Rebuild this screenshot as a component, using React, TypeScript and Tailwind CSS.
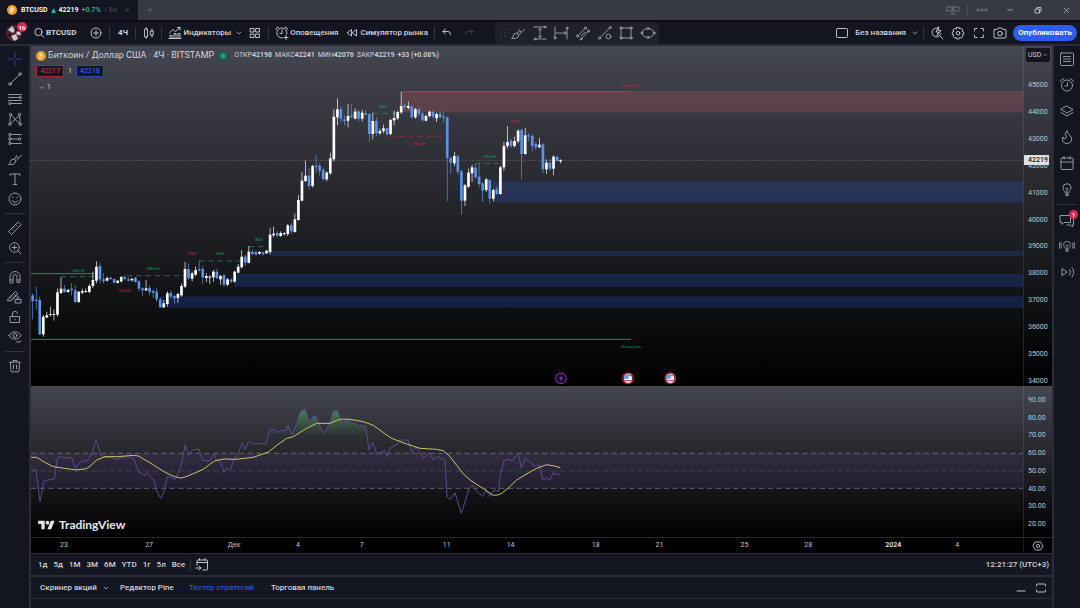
import { ReactNode } from "react";
import clsx from "clsx";
import { ChevronDown, Flame, Minus, Plus, X } from "lucide-react";

// Each candle: [high, body top, body bottom, low, 1 = up / 0 = down]
type Candle = [number, number, number, number, 0 | 1];

const CANDLE_STEP = 10.63;

// Candles are grouped by swing, y values are relative to the base of the swing
const swings: Array<{ base: number; candles: Candle[] }> = [
  {
    base: 522,
    candles: [
      [220, 226, 243, 298, 0],
      [200, 239, 243, 268, 0],
      [230, 240, 343, 345, 0],
      [285, 290, 343, 350, 1],
      [275, 286, 292, 295, 1],
      [260, 282, 285, 290, 1],
      [268, 282, 285, 302, 1],
      [205, 217, 284, 290, 1],
      [172, 206, 219, 222, 1],
      [195, 206, 216, 218, 0],
      [206, 210, 216, 218, 1],
      [190, 206, 211, 226, 0],
      [195, 211, 246, 250, 0],
      [213, 215, 246, 248, 1],
      [206, 213, 218, 222, 1],
      [205, 213, 216, 218, 1],
      [192, 198, 216, 220, 1],
      [155, 180, 198, 204, 1],
      [124, 140, 182, 190, 1],
      [128, 138, 178, 190, 0],
      [160, 178, 184, 190, 0],
      [170, 174, 182, 184, 1],
      [170, 173, 177, 180, 0],
      [175, 177, 188, 190, 0],
      [180, 182, 189, 190, 1],
      [168, 171, 184, 188, 1],
      [165, 171, 177, 180, 0],
      [172, 178, 182, 184, 0],
      [173, 177, 181, 184, 1],
      [171, 173, 186, 188, 0],
      [180, 184, 206, 214, 0],
      [202, 205, 211, 228, 0],
      [180, 205, 211, 213, 1],
      [196, 204, 216, 226, 0],
      [208, 213, 218, 234, 0],
      [205, 215, 238, 246, 0],
      [232, 238, 262, 264, 0],
      [240, 250, 262, 264, 1],
      [214, 220, 252, 260, 1],
      [212, 219, 230, 234, 0],
      [225, 228, 235, 252, 0],
      [218, 222, 234, 248, 1],
      [190, 198, 226, 230, 1],
      [125, 147, 200, 204, 1],
      [130, 147, 174, 180, 0],
      [155, 160, 176, 184, 1],
      [140, 150, 164, 168, 1],
    ],
  },
  {
    base: 432,
    candles: [
      [212, 237, 241, 245, 0],
      [228, 237, 262, 282, 0],
      [250, 258, 264, 276, 1],
      [256, 260, 263, 282, 1],
      [240, 245, 262, 275, 1],
      [236, 245, 264, 268, 0],
      [255, 258, 268, 284, 1],
      [252, 256, 284, 290, 0],
      [264, 268, 284, 288, 1],
      [264, 269, 275, 280, 0],
      [242, 245, 275, 278, 1],
      [222, 230, 248, 250, 1],
      [180, 200, 232, 235, 1],
      [195, 200, 218, 228, 0],
      [168, 185, 218, 220, 1],
      [178, 185, 192, 196, 0],
      [182, 186, 194, 197, 0],
      [183, 186, 191, 194, 1],
      [184, 187, 193, 196, 0],
      [180, 182, 190, 192, 1],
      [114, 134, 186, 192, 1],
      [110, 131, 136, 142, 1],
      [122, 129, 137, 142, 0],
      [124, 129, 138, 140, 1],
      [126, 130, 133, 136, 1],
      [102, 106, 132, 138, 1],
      [98, 106, 124, 132, 0],
      [70, 88, 126, 128, 1],
      [15, 30, 90, 92, 1],
    ],
  },
  {
    base: 102,
    candles: [
      [276, 302, 362, 364, 1],
      [242, 287, 303, 306, 1],
      [265, 287, 318, 328, 0],
      [254, 258, 318, 322, 1],
      [224, 257, 261, 278, 0],
      [250, 257, 272, 286, 0],
      [262, 270, 297, 302, 0],
      [274, 278, 298, 304, 1],
      [218, 235, 280, 284, 1],
      [88, 110, 238, 244, 1],
      [55, 88, 112, 136, 1],
      [80, 87, 116, 128, 0],
      [106, 118, 123, 136, 0],
      [72, 108, 122, 142, 1],
      [74, 106, 110, 116, 0],
      [85, 95, 116, 118, 1],
      [90, 94, 116, 126, 0],
      [90, 98, 116, 124, 1],
      [90, 99, 104, 106, 0],
      [100, 102, 162, 186, 0],
      [98, 123, 162, 178, 1],
      [112, 122, 160, 168, 0],
      [146, 153, 160, 164, 1],
      [134, 145, 153, 160, 1],
      [142, 144, 164, 166, 0],
      [116, 120, 162, 166, 1],
      [92, 114, 121, 136, 1],
      [92, 96, 115, 120, 1],
      [35, 78, 97, 102, 1],
      [70, 76, 82, 86, 0],
      [64, 78, 84, 88, 1],
      [76, 80, 112, 114, 0],
      [84, 88, 112, 116, 1],
      [82, 88, 102, 110, 0],
      [96, 101, 121, 124, 0],
      [104, 108, 122, 124, 1],
      [92, 95, 108, 112, 1],
      [93, 95, 110, 116, 0],
      [98, 102, 115, 126, 1],
      [94, 101, 112, 116, 0],
      [94, 109, 113, 128, 0],
      [110, 112, 234, 364, 0],
      [230, 234, 248, 282, 0],
      [216, 228, 250, 258, 1],
      [224, 228, 276, 284, 0],
      [270, 274, 362, 404, 0],
      [312, 316, 362, 378, 1],
      [266, 278, 320, 324, 1],
      [254, 262, 280, 306, 1],
      [252, 263, 292, 296, 0],
      [250, 290, 312, 322, 0],
      [306, 310, 332, 366, 0],
      [294, 298, 330, 336, 1],
      [298, 300, 356, 372, 0],
      [326, 330, 356, 364, 1],
      [318, 328, 342, 344, 0],
      [258, 262, 342, 344, 1],
      [186, 198, 262, 272, 1],
      [138, 186, 198, 206, 1],
      [176, 182, 198, 204, 0],
      [170, 183, 198, 202, 1],
      [148, 152, 184, 190, 1],
      [146, 150, 222, 298, 0],
      [144, 166, 222, 224, 1],
      [160, 166, 170, 184, 0],
      [162, 168, 198, 214, 0],
      [186, 192, 202, 210, 0],
      [174, 194, 202, 204, 1],
      [190, 193, 268, 280, 0],
      [238, 248, 268, 282, 1],
      [238, 248, 266, 272, 0],
      [226, 230, 266, 286, 1],
      [228, 230, 243, 246, 0],
      [238, 240, 244, 250, 1],
    ],
  },
];

const candles = swings.flatMap(({ base, candles }) =>
  candles.map(([high, top, bottom, low, up]) => ({
    high: high + base,
    top: top + base,
    bottom: bottom + base,
    low: low + base,
    up: up === 1,
  })),
);

const demandZones = [
  { x: 1385, y: 407, height: 62 },
  { x: 711, y: 615, height: 15 },
  { x: 610, y: 684, height: 39 },
  { x: 387, y: 751, height: 34 },
];

const structureLines = [
  { x1: 90, x2: 190, y: 692, color: "#2f8f6c" },
  { x1: 288, x2: 460, y: 689, color: "#2f8f6c" },
  { x1: 504, x2: 633, y: 645, color: "#2f8f6c" },
  { x1: 654, x2: 712, y: 602, color: "#2f8f6c" },
  { x1: 1026, x2: 1092, y: 202, color: "#2f8f6c" },
  { x1: 1077, x2: 1242, y: 271, color: "#b8284a" },
  { x1: 1332, x2: 1402, y: 352, color: "#2f8f6c" },
];

const structureLabels = [
  { x: 141, y: 678, text: "CHoCH", color: "#1c9a68" },
  { x: 280, y: 738, text: "CHoCH", color: "#c2224a" },
  { x: 366, y: 672, text: "CHoCH", color: "#1c9a68" },
  { x: 483, y: 628, text: "EQH", color: "#c2224a" },
  { x: 568, y: 628, text: "BOS", color: "#1c9a68" },
  { x: 684, y: 586, text: "BOS", color: "#1c9a68" },
  { x: 1057, y: 187, text: "BOS", color: "#1c9a68" },
  { x: 1161, y: 297, text: "CHoCH", color: "#c2224a" },
  { x: 1375, y: 337, text: "CHoCH", color: "#1c9a68" },
  { x: 1452, y: 230, text: "EQH", color: "#c2224a" },
  { x: 1800, y: 123, text: "Weak High", color: "#c2224a" },
  { x: 1800, y: 906, text: "Strong Low", color: "#1c9a68" },
];

const rsiLine =
  "2,252 15,252 27,347 39,284 70,279 79,217 89,211 102,216 122,214 134,250 145,230 157,225 169,225 184,197 196,161 209,207 222,215 242,214 257,220 282,212 297,214 307,216 317,242 325,260 334,264 342,270 347,260 362,277 369,282 377,314 389,337 399,317 409,270 417,274 432,280 442,262 452,232 463,176 472,207 484,192 504,189 515,224 537,224 549,202 555,220 569,230 579,259 587,247 597,254 609,220 622,202 633,170 642,190 652,167 665,174 687,172 703,176 709,157 717,130 729,130 739,140 747,134 763,134 771,117 783,147 797,112 809,76 823,69 835,112 845,92 855,92 863,112 877,142 890,127 902,92 907,75 919,74 932,107 947,102 962,110 972,112 982,121 992,118 1004,122 1014,192 1025,170 1037,204 1062,194 1069,212 1077,187 1095,177 1107,162 1122,162 1132,164 1142,200 1155,184 1177,217 1197,200 1207,222 1219,212 1242,224 1248,332 1257,340 1272,320 1291,382 1315,307 1325,297 1332,310 1355,332 1365,312 1377,332 1389,312 1402,317 1409,262 1419,224 1432,220 1445,224 1462,202 1471,247 1482,218 1497,227 1509,240 1527,237 1535,282 1547,277 1557,282 1567,260 1577,265 1588,265";

const averageLine =
  "0,214 17,214 40,228 67,242 100,247 137,252 167,248 180,238 197,222 222,212 260,212 307,208 322,210 360,232 397,256 425,270 447,276 460,274 477,267 517,250 535,236 552,224 580,219 612,220 667,214 712,198 740,176 767,157 787,152 825,128 857,112 897,112 920,102 937,99 957,100 997,107 1027,118 1057,140 1082,157 1127,174 1167,187 1217,190 1237,194 1257,212 1297,264 1320,284 1357,308 1387,328 1400,327 1412,322 1435,303 1457,282 1485,265 1517,247 1547,236 1570,240 1588,245";

const prices = [
  "45000", "44000", "43000", "42000", "41000", "40000",
  "39000", "38000", "37000", "36000", "35000", "34000",
];

const rsiLevels = ["90.00", "80.00", "70.00", "60.00", "50.00", "40.00", "30.00", "20.00"];

// span = days until the next mark
const dates = [
  { label: "23", span: 4 },
  { label: "27", span: 4 },
  { label: "Дек", span: 3 },
  { label: "4", span: 3 },
  { label: "7", span: 4 },
  { label: "11", span: 3 },
  { label: "14", span: 4 },
  { label: "18", span: 3 },
  { label: "21", span: 4 },
  { label: "25", span: 3 },
  { label: "28", span: 4 },
  { label: "2024", span: 3, bold: true },
  { label: "4", span: 3.1 },
];

const ranges = ["1д", "5д", "1М", "3М", "6М", "YTD", "1г", "5л", "Все"];

const Icon = ({ children, className }: { children: ReactNode; className?: string }) => (
  <svg
    viewBox="0 0 16 16"
    className={clsx("size-4 shrink-0", className)}
    fill="none"
    stroke="currentColor"
    strokeWidth="0.9"
    strokeLinecap="round"
    strokeLinejoin="round"
    aria-hidden="true"
  >
    {children}
  </svg>
);

const brush = (
  <>
    <path d="M2 13.500c1.500-1 1-2 1.500-3.500s2-2.200 3.500-1.700 2 2.200 1 3.700-3.500 1.700-6 1.500z" />
    <path d="M7.500 8.500l2-3.500M8.800 9.800l5.700-5.300M9.500 5l1.500 2" />
  </>
);
const bulb = (
  <>
    <path d="M6.300 11.500c0-1.500-2.300-2-2.300-4.800a4 4 0 0 1 8 0c0 2.800-2.300 3.300-2.300 4.800zM6.300 13.300h3.400M7 14.600h2" />
    <path d="M6.800 7l1.200 1.200L9.200 7M8 8.200v3" />
  </>
);
const alarm = (
  <>
    <circle cx="8" cy="8.500" r="5.500" />
    <path d="M8.500 5.500v3.500H6M1.700 4.500a2.500 2.500 0 0 1 3-2.500M14.300 4.500a2.500 2.500 0 0 0-3-2.500" />
  </>
);

const drawingTools: Array<Array<{ label: string; icon: ReactNode; active?: boolean }>> = [
  [
    { label: "Перекрестие", active: true, icon: <path d="M8 1.500v5M8 9.500v5M1.500 8h5M9.500 8h5" /> },
    {
      label: "Линия тренда",
      icon: (
        <>
          <circle cx="3" cy="13" r="1.300" />
          <circle cx="13" cy="3" r="1.300" />
          <path d="M4 12l8-8" />
        </>
      ),
    },
    {
      label: "Фибоначчи",
      icon: (
        <>
          <path d="M1.500 3.500h13M1.500 6.500h10.500M1.500 9.500h13M4 12.500h10.500" />
          <circle cx="13.200" cy="6.500" r="1.200" />
          <circle cx="2.800" cy="12.500" r="1.200" />
        </>
      ),
    },
    {
      label: "Паттерны",
      icon: (
        <>
          <path d="M2.800 12l.6-7.300M4.500 4.500L8 8M4 12.200l8-7.500M12.600 4.700l.6 7.300M8 8.500l4.300 3.800" />
          <circle cx="3.500" cy="3.500" r="1.200" />
          <circle cx="12.500" cy="3.500" r="1.200" />
          <circle cx="2.800" cy="13.200" r="1.200" />
          <circle cx="13.200" cy="13.200" r="1.200" />
        </>
      ),
    },
    {
      label: "Прогноз",
      icon: (
        <>
          <path d="M4 3.500h10.500M4 8h7M4 12.500h10.500M2.800 5v1.500M2.800 9.500v1.500" />
          <circle cx="2.800" cy="3.500" r="1.200" />
          <circle cx="2.800" cy="8" r="1.200" />
          <circle cx="2.800" cy="12.500" r="1.200" />
          <circle cx="12.500" cy="8" r="1.200" />
        </>
      ),
    },
    { label: "Кисть", icon: brush },
    { label: "Текст", icon: <path d="M3 4.500V3h10v1.500M8 3v10.500M6.300 13.500h3.400" /> },
    {
      label: "Иконки",
      icon: (
        <>
          <circle cx="8" cy="8" r="6" />
          <path d="M5 9.500c1 2.500 5 2.500 6 0M6 6.200v.6M10 6.200v.6" />
        </>
      ),
    },
  ],
  [
    {
      label: "Линейка",
      icon: <path d="M1.800 11.200l9.400-9.400 3 3-9.400 9.400zM4.500 8.500l1.300 1.300M6.500 6.500l1.300 1.300M8.500 4.500l1.300 1.300" />,
    },
    {
      label: "Приблизить",
      icon: (
        <>
          <circle cx="7.500" cy="7.500" r="4.800" />
          <path d="M11 11l3 3M5.300 7.500h4.400M7.500 5.300v4.400" />
        </>
      ),
    },
  ],
  [
    {
      label: "Магнит",
      icon: <path d="M3 13.500V7.500a5 5 0 0 1 10 0v6h-3v-6a2 2 0 0 0-4 0v6zM3 11h3M10 11h3" />,
    },
    {
      label: "Режим рисования",
      icon: (
        <>
          <path d="M1.500 9.500l7-7 2.500 2.500-6.500 6.500-3.500 .5zM3 8.200l2.500 2.500M4.800 6.400l2.500 2.500M6.500 4.500L9 7" />
          <path d="M8.500 10.500h5.500v3.500H8.500zM10 10.500V9a1.200 1.200 0 0 1 2.400 0" />
        </>
      ),
    },
    {
      label: "Заблокировать",
      icon: <path d="M3.500 7.500h9v6h-9zM5.500 7.500V5a2.500 2.500 0 0 1 5-.5M8 10v1" />,
    },
    {
      label: "Скрыть",
      icon: (
        <>
          <path d="M2 6.500c3-5 9-5 12 0-3 5-9 5-12 0zM9 13.500l1.500-1.500 1 1.500 2.500-1.500" />
          <circle cx="8" cy="6.500" r="2" />
        </>
      ),
    },
  ],
  [
    {
      label: "Удалить",
      icon: <path d="M2.500 4.200h11M6 4V2.500h4V4M3.500 4.500l.5 8.500q0 .8 1 .8h6q1 0 1-.8l.5-8.500M6.500 7v4M9.500 7v4" />,
    },
  ],
];

const widgets: Array<Array<{ label: string; icon: ReactNode; badge?: string }>> = [
  [
    {
      label: "Список котировок",
      icon: (
        <>
          <rect x="1.500" y="2" width="13" height="12.500" rx="1" />
          <path d="M4.500 5.500h7M4.500 8h7M4.500 10.500h7" />
        </>
      ),
    },
    { label: "Оповещения", icon: alarm },
    { label: "Слои", icon: <path d="M8 3l6 3.500-6 3.500-6-3.500zM2 9.500L8 13l6-3.500" /> },
    {
      label: "Горячие списки",
      icon: <Flame width={16} height={16} strokeWidth={1.4} />,
    },
    {
      label: "Календарь",
      icon: <path d="M2 4q0-1 1-1h10q1 0 1 1v9.500q0 1-1 1H3q-1 0-1-1zM2 7h12M5 1.500V4M11 1.500V4" />,
    },
    { label: "Идеи", icon: bulb },
  ],
  [
    {
      label: "Чат",
      badge: "1",
      icon: <path d="M1.500 3.500h10v7H5l-2 2v-2H1.500zM13.500 6.500h1V13h-1v2l-2-2H8" />,
    },
    {
      label: "Стрим идей",
      icon: (
        <>
          <g transform="translate(1.200 1) scale(.85)">{bulb}</g>
          <path d="M2.500 5c-.8 1.500-.8 3.500 0 5M13.500 5c.8 1.500.8 3.500 0 5M.8 4.500c-.8 2-.8 4 0 6M15.200 4.500c.8 2 .8 4 0 6" />
        </>
      ),
    },
    {
      label: "Трансляции",
      icon: <path d="M3 5v6.500L8 8.200zM10.500 5.500c1.200 1.700 1.200 3.800 0 5.500M13 3.500c2.300 3 2.300 6.500 0 9.500" />,
    },
  ],
];

const favorites = [
  { label: "Кисть", icon: brush },
  {
    label: "Диапазон цен",
    icon: (
      <>
        <path d="M2 2h10M4 14h10M8 3.500v9M6.500 5L8 3.500 9.500 5M6.500 11L8 12.500 9.500 11" />
        <circle cx="13" cy="2" r="1" />
        <circle cx="3" cy="14" r="1" />
      </>
    ),
  },
  {
    label: "Диапазон дат",
    icon: (
      <>
        <path d="M2 2v10M14 4v10M3 8h10M11.500 6.500L13 8l-1.500 1.500" />
        <circle cx="2" cy="13" r="1" />
        <circle cx="14" cy="3" r="1" />
      </>
    ),
  },
  {
    label: "Параллельный канал",
    icon: (
      <>
        <path d="M3.200 10.300l6.600-6.600M6.700 13.300l6.100-6.600M6 11l4-4" />
        <circle cx="2.500" cy="11" r="1" />
        <circle cx="10.500" cy="3" r="1" />
        <circle cx="6" cy="14" r="1" />
        <circle cx="13.500" cy="6" r="1" />
      </>
    ),
  },
  {
    label: "Линия тренда",
    icon: (
      <>
        <path d="M3.300 12.400l9.100-9.100" />
        <circle cx="2.500" cy="13.200" r="1.100" />
        <circle cx="13.200" cy="2.500" r="1.100" />
        <circle cx="11.500" cy="11.500" r="2.400" />
      </>
    ),
  },
  {
    label: "Прямоугольник",
    icon: (
      <>
        <path d="M3 4v8M13 4v8M4 3h8M4 13h8" />
        <circle cx="3" cy="3" r="1.100" />
        <circle cx="13" cy="3" r="1.100" />
        <circle cx="3" cy="13" r="1.100" />
        <circle cx="13" cy="13" r="1.100" />
      </>
    ),
  },
  {
    label: "Эллипс",
    icon: (
      <>
        <ellipse cx="8" cy="8" rx="6" ry="4.500" />
        <circle cx="1.800" cy="8" r="1" className="fill-[#1e202c]" />
        <circle cx="14.200" cy="8" r="1" className="fill-[#1e202c]" />
        <circle cx="8" cy="3.500" r="1" className="fill-[#1e202c]" />
        <circle cx="8" cy="12.500" r="1" className="fill-[#1e202c]" />
      </>
    ),
  },
];

const Bitcoin = () => (
  <svg viewBox="0 0 20 20" className="size-[10px] shrink-0" aria-hidden="true">
    <circle cx="10" cy="10" r="10" fill="#f09a2c" />
    <path
      d="M8 5.500l-1.500 8.500M7 5.500l4.500 .7c2.500.5 2 3.600-.7 3.400l-3-.4 3.300.5c2.700.6 2 4.100-1 3.900l-4.300-.6M9.800 4l-.3 1.700M8.300 14l-.3 1.800"
      fill="none"
      stroke="#fff"
      strokeWidth="1.500"
    />
  </svg>
);

const Divider = () => <span className="h-3 w-px shrink-0 bg-[#343743]" />;

const TabBar = () => (
  <header className="flex h-5 items-center bg-[#373943] text-[#b2b5be]">
    <div className="flex h-full w-[138px] items-center bg-[#131521] pl-[7px] text-[7px] font-semibold">
      <Bitcoin />
      <span className="ml-1 text-white">BTCUSD</span>
      <svg viewBox="0 0 6 6" className="mx-[3px] size-[5px]" aria-hidden="true">
        <path d="M3 0l3 6H0z" fill="#2fb28e" />
      </svg>
      <span className="text-white">42219</span>
      <span className="ml-[3px] text-[#2fb28e]">+0.7%</span>
      <span className="ml-1 text-[#3d404d]">/ Бе</span>
      <button aria-label="Закрыть вкладку" className="mr-[7px] ml-auto text-[#4d505c]">
        <X className="size-2" />
      </button>
    </div>
    <button aria-label="Новая вкладка" className="ml-[7px] text-[#70737e]">
      <Plus className="size-[10px]" strokeWidth={1.5} />
    </button>
    <div className="ml-auto flex items-center text-[#70737e]">
      <button aria-label="Мониторы">
        <Icon>
          <path d="M2 5h5v4H2zM9 5h5v4H9zM8 4v8M5.500 12h5" />
        </Icon>
      </button>
      <span className="mx-[6px] h-3 w-px bg-[#4a4d58]" />
      <button aria-label="Меню">
        <Icon>
          <circle cx="4" cy="8" r="1.200" />
          <circle cx="8" cy="8" r="1.200" />
          <circle cx="12" cy="8" r="1.200" />
        </Icon>
      </button>
      <button aria-label="Свернуть" className="ml-[6px] flex w-7 justify-center text-[#c4c6cc]">
        <Minus className="size-2" />
      </button>
      <button aria-label="Восстановить" className="flex w-7 justify-center text-[#c4c6cc]">
        <Icon>
          <path d="M5.500 7h4v4h-4zM7 7V5.500h4v4H9.500" />
        </Icon>
      </button>
      <button aria-label="Закрыть" className="flex w-7 justify-center text-[#c4c6cc]">
        <X className="size-[9px]" strokeWidth={1.8} />
      </button>
    </div>
  </header>
);

const Toolbar = () => (
  <div className="flex h-6 items-center border-t-2 border-[#0c0d16] bg-[#131520] text-[8px] font-medium text-[#d1d4dc]">
    <button aria-label="Профиль" className="relative ml-[6px] size-4 shrink-0">
      <svg viewBox="0 0 16 16" className="size-4">
        <circle cx="8" cy="8" r="8" fill="#5a1f33" />
        <path d="M2 5l4-4 3 4-2 3zM5 11l5-2 2 5-4 2zM10 6l4 1 1 3-4 0z" fill="#c9ccd2" />
        <path d="M1 9l4 0 0 4zM8 4l4-1-1 4z" fill="#12131b" />
      </svg>
      <span className="absolute -top-[3px] left-[11px] flex size-[10px] items-center justify-center rounded-full bg-[#e0284f] text-[6px] font-bold text-white">
        16
      </span>
    </button>
    <button className="ml-[10px] flex items-center font-bold">
      <Icon className="-mx-px">
        <circle cx="7.500" cy="7" r="3.600" />
        <path d="M10.200 9.700l2.500 2.500" />
      </Icon>
      BTCUSD
    </button>
    <div className="ml-3 flex items-center">
      <button aria-label="Сравнить">
        <Icon>
          <circle cx="8" cy="8" r="5" />
          <path d="M8 5.500v5M5.500 8h5" />
        </Icon>
      </button>
      <span className="w-[5px]" />
      <Divider />
      <button className="w-[25px] font-bold">4Ч</button>
      <Divider />
      <button aria-label="Свечи" className="flex w-[25px] justify-center">
        <Icon>
          <path d="M4 4h2.500v8H4zM5.200 2.500V4M5.200 12v1.500M9.700 6h2.500v4H9.700zM11 4v2M11 10v2" />
        </Icon>
      </button>
      <Divider />
      <button className="ml-[5px] flex items-center">
        <Icon>
          <path d="M3 13.500v-3h2v3M7 13.500v-5h2v5M11 13.500v-5h2v5M2 13.500h12M2.500 8l3.500-3.500 2.500 2L13 2.500M10.500 2.500H13V5" />
        </Icon>
        Индикаторы
      </button>
    </div>
    <button aria-label="Избранные индикаторы" className="ml-1">
      <ChevronDown className="size-2" />
    </button>
    <button aria-label="Шаблоны" className="ml-1">
      <Icon>
        <path d="M3.500 3.500H7V7H3.500zM9 3.500h3.500V7H9zM3.500 9H7v3.500H3.500zM9 9h3.500v3.500H9z" />
      </Icon>
    </button>
    <span className="w-[5px]" />
    <Divider />
    <button className="ml-[5px] flex items-center">
      <Icon>
        <path d="M12.800 9A5 5 0 1 0 8.500 13M8 5v3.500H6M2 4.500a2.500 2.500 0 0 1 2.500-2.500M13.500 4.500A2.500 2.500 0 0 0 11 2M12 10.500v4M10 12.500h4" />
      </Icon>
      Оповещения
    </button>
    <button className="ml-[6px] flex items-center">
      <Icon>
        <path d="M7.500 5v6L3.500 8zM12.500 5v6L8.500 8z" />
      </Icon>
      Симулятор рынка
    </button>
    <span className="w-[6px]" />
    <Divider />
    <button aria-label="Отменить" className="ml-1">
      <Icon>
        <path d="M6.500 4L4 6.500 6.500 9M4 6.500h5q2.500 0 2.500 3" />
      </Icon>
    </button>
    <button aria-label="Повторить" className="ml-[6px] text-[#3d404c]">
      <Icon>
        <path d="M9.500 4L12 6.500 9.500 9M12 6.500H7q-2.500 0-2.500 3" />
      </Icon>
    </button>
    <div className="ml-[18px] flex h-full w-[164px] shrink-0 items-center justify-between rounded-sm bg-[#1e202c] pr-[3px] text-[#a3a6b0]">
      <Icon className="-mr-[7px] text-[#5b5e6b]">
        <path d="M6 4.500h.1M10 4.500h.1M6 8h.1M10 8h.1M6 11.500h.1M10 11.500h.1" />
      </Icon>
      {favorites.map((item) => (
        <button key={item.label} aria-label={item.label}>
          <Icon>{item.icon}</Icon>
        </button>
      ))}
    </div>
    <div className="ml-auto flex items-center">
      <button className="flex items-center">
        <Icon className="mr-[5px]">
          <rect x="2.500" y="3.500" width="11" height="9" rx="1" />
        </Icon>
        Без названия
        <ChevronDown className="mr-1 ml-[5px] size-2" />
      </button>
      <Divider />
      <div className="mx-[5px] flex items-center gap-[5px]">
        <button aria-label="Быстрый поиск">
          <Icon>
            <path d="M8.500 3A4.500 4.500 0 1 0 12 8.500M11 11l3 3M9.500 2L7 7h2.500L8 10.500 12 5.500H9.500z" />
          </Icon>
        </button>
        <button aria-label="Настройки">
          <Icon>
            <path d="M6.800 2.500h2.400l.5 1.500 1.600-.7 1.600 1.600-.7 1.600 1.500.5v2.400l-1.500.5.7 1.600-1.600 1.600-1.600-.7-.5 1.500H6.800l-.5-1.500-1.600.7-1.600-1.600.7-1.600-1.500-.5V7l1.500-.5-.7-1.600 1.600-1.600 1.600.7z" />
            <circle cx="8" cy="8.200" r="1.800" />
          </Icon>
        </button>
        <button aria-label="На весь экран">
          <Icon>
            <path d="M3.500 6V4q0-.5.500-.5h2M10 3.500h2q.5 0 .5.500v2M12.500 10v2q0 .5-.5.500h-2M6 12.500H4q-.5 0-.5-.5v-2" />
          </Icon>
        </button>
        <button aria-label="Снимок">
          <Icon>
            <path d="M2.500 4.500H5L6 3h4l1 1.500h2.500q.5 0 .5.500v7.500q0 .5-.5.500h-11q-.5 0-.5-.5V5q0-.5.500-.5z" />
            <circle cx="8" cy="8.500" r="2.300" />
          </Icon>
        </button>
      </div>
      <button className="mr-[3px] h-4 w-16 rounded-full bg-[#2f5bee] text-[8px] font-semibold text-white">
        Опубликовать
      </button>
    </div>
  </div>
);

const Legend = () => (
  <div className="absolute top-1 left-[5px] flex flex-col gap-1 text-[7px] text-[#d1d4dc]">
    <div className="flex h-[11px] items-center">
      <Bitcoin />
      <h1 className="ml-[2px] text-[9px] whitespace-nowrap">Биткоин / Доллар США · 4Ч · BITSTAMP</h1>
      <span className="mr-2 ml-[6px] size-[6px] rounded-full bg-[#159b75] outline-2 outline-[#24574f]" />
      <dl className="flex gap-[3px] font-semibold whitespace-nowrap">
        {[
          ["ОТКР", "42198"],
          ["МАКС", "42241"],
          ["МИН", "42076"],
          ["ЗАКР", "42219"],
        ].map(([name, value]) => (
          <div key={name} className="flex">
            <dt className="font-normal">{name}</dt>
            <dd>{value}</dd>
          </div>
        ))}
        <dd>+33 (+0.08%)</dd>
      </dl>
    </div>
    <div className="flex h-3 items-center gap-1">
      <button className="h-3 w-7 rounded-xs border border-[#b3203f] bg-[#161724] text-[#e0284f]">42217</button>
      <span>1</span>
      <button className="h-3 w-7 rounded-xs border border-[#2a48b8] bg-[#161724] text-[#3f68ff]">42218</button>
    </div>
    <button className="flex h-3 items-center gap-[2px] self-start px-[2px]">
      <ChevronDown className="size-[7px]" />1
    </button>
  </div>
);

const flag = (x: number) => (
  <g key={x} transform={`translate(${x} 997)`}>
    <circle r="16" fill="#1a0a12" stroke="#b3263f" strokeWidth="4" />
    <path d="M-12-2a12 12 0 0 1 24 0v4a12 12 0 0 1-24 0z" fill="#e9ecf2" />
    <path d="M1-8h9M-11 7h22" stroke="#c2324a" strokeWidth="3" />
    <path d="M-12 0a12 12 0 0 1 13-13V1h-13z" fill="#5e9be0" />
  </g>
);

const PriceChart = () => (
  <svg viewBox="0 0 2976 1020" className="block h-auto w-full" role="img" aria-label="График BTCUSD">
    <rect x="1111" y="137" width="1865" height="62" fill="#f0606e" fillOpacity="0.2" />
    {demandZones.map((zone) => (
      <rect
        key={zone.y}
        x={zone.x}
        y={zone.y}
        width={2976 - zone.x}
        height={zone.height}
        fill="#2962ff"
        fillOpacity="0.2"
      />
    ))}
    <path d="M1111 137H2976" stroke="#7e4250" strokeWidth="3" />
    <path d="M1111 137H1800" stroke="#b03a50" strokeWidth="3" />
    <path d="M0 683H190M0 880H1800" stroke="#2c8765" strokeWidth="3" />
    <path d="M0 343H2976" stroke="#85878d" strokeWidth="2" strokeDasharray="3 4" />
    {structureLines.map((line) => (
      <path
        key={line.x1}
        d={`M${line.x1} ${line.y}H${line.x2}`}
        stroke={line.color}
        strokeWidth="2"
        strokeDasharray="16 12"
      />
    ))}
    {candles.map((candle, index) => {
      const x = 5 + index * CANDLE_STEP;
      const color = candle.up ? "#ffffff" : "#5b93e8";
      return (
        <g key={index} fill={color}>
          <rect x={x - 1} y={candle.high} width="2" height={candle.low - candle.high} />
          <rect x={x - 4} y={candle.top} width="8" height={candle.bottom - candle.top} />
        </g>
      );
    })}
    {structureLabels.map((label) => (
      <text key={label.x + label.text} x={label.x} y={label.y} fill={label.color} fontSize="12" textAnchor="middle">
        {label.text}
      </text>
    ))}
    <g transform="translate(1590 997)">
      <circle r="16" fill="#1c0c2a" stroke="#8338a8" strokeWidth="3" />
      <path d="M3-9L-6 2h5l-3 8L6-2H1z" fill="#8338a8" />
    </g>
    {[1791, 1918].map(flag)}
  </svg>
);

const RsiChart = () => (
  <svg viewBox="0 0 2976 453" className="block h-auto w-full" role="img" aria-label="Индекс относительной силы">
    <defs>
      <linearGradient id="overbought" gradientUnits="userSpaceOnUse" x1="0" y1="60" x2="0" y2="149">
        <stop offset="0" stopColor="#4caf50" stopOpacity="0.7" />
        <stop offset="0.6" stopColor="#4caf50" stopOpacity="0.25" />
        <stop offset="1" stopColor="#4caf50" stopOpacity="0" />
      </linearGradient>
      <clipPath id="above70">
        <rect width="1400" height="149" />
      </clipPath>
    </defs>
    <rect y="202" width="2976" height="105" fill="#7e57c2" fillOpacity="0.13" />
    <path d="M0 202H2976M0 307H2976" stroke="#82848e" strokeWidth="2" strokeDasharray="16 10" />
    <path d="M0 255H2976" stroke="#4d4b59" strokeWidth="2" strokeDasharray="16 10" />
    <polygon points={`2,453 ${rsiLine} 1588,453`} fill="url(#overbought)" clipPath="url(#above70)" />
    <polyline points={rsiLine} fill="none" stroke="#5f4790" strokeWidth="3" strokeLinejoin="round" />
    <polyline points={averageLine} fill="none" stroke="#c9c562" strokeWidth="3" strokeLinejoin="round" />
  </svg>
);

const Watermark = () => (
  <div className="absolute bottom-[5px] left-[7px] flex items-center gap-1 text-[#e6e7ea]">
    <svg viewBox="0 0 36 28" className="h-[13px] w-[17px]" fill="currentColor" aria-hidden="true">
      <path d="M14 22H7V11H0V4h14zM28 22h-8l7.500-18h8z" />
      <circle cx="20" cy="8" r="4" />
    </svg>
    <span className="font-[Lato] text-[12px] leading-[14px] font-bold">TradingView</span>
  </div>
);

const BottomPanel = () => (
  <>
    <div className="flex h-[22px] items-center border-t border-[#2a2d39] bg-[#141622] pr-[3px] pl-1 text-[8px] font-medium text-[#d1d4dc]">
      {ranges.map((range) => (
        <button key={range} className="px-[3px]">
          {range}
        </button>
      ))}
      <span className="w-[2px]" />
      <Divider />
      <button aria-label="Перейти к дате" className="ml-[3px]">
        <Icon>
          <path d="M3 8V4q0-1 1-1h8.500q1 0 1 1v8q0 1-1 1H9M3 5.500h10.500M5.500 1.500V3M11 1.500V3M2 11h5M5 9l2 2-2 2" />
        </Icon>
      </button>
      <time className="ml-auto">12:21:27 (UTC+3)</time>
    </div>
    <nav className="flex h-6 items-center border-t-2 border-b border-[#2a2d39] bg-[#141622] pr-[3px] pl-[9px] text-[8px] font-medium text-[#d1d4dc]">
      <button className="flex w-20 items-center gap-[5px] whitespace-nowrap">
        Скринер акций
        <ChevronDown className="size-2" />
      </button>
      <button className="w-[69px] text-left">Редактор Pine</button>
      <button className="w-[82px] text-left text-[#2c50d8]">Тестер стратегий</button>
      <button className="text-left">Торговая панель</button>
      <button aria-label="Свернуть панель" className="ml-auto">
        <Icon>
          <path d="M4 11h8" />
        </Icon>
      </button>
      <button aria-label="Развернуть панель" className="ml-1">
        <Icon>
          <path d="M3.500 6V5q0-1 1-1h7q1 0 1 1v1M3.500 10v1q0 1 1 1h7q1 0 1-1v-1" />
        </Icon>
      </button>
    </nav>
    <div className="min-h-[9px] flex-1 bg-[#141622]" />
  </>
);

const App = () => {
  return (
    <div className="flex min-h-screen flex-col bg-[#2a2d39] font-[Roboto,sans-serif]">
      <TabBar />
      <Toolbar />
      <div className="flex flex-1 gap-[2px] pt-[2px]">
        <aside className="flex w-[29px] shrink-0 flex-col bg-[#131520] pt-[3px] text-[#a3a6b0]">
          {drawingTools.map((group, index) => (
            <div key={index} className="flex flex-col">
              {index > 0 && <span className="mx-1 my-1 h-px bg-[#2f323e]" />}
              {group.map((tool) => (
                <button
                  key={tool.label}
                  aria-label={tool.label}
                  className={clsx("flex h-5 items-center justify-center", tool.active && "text-[#2c48b8]")}
                >
                  <Icon>{tool.icon}</Icon>
                </button>
              ))}
            </div>
          ))}
        </aside>

        <main className="flex min-w-0 flex-1 flex-col bg-black">
          <section className="flex bg-linear-to-b/srgb from-[#444650] to-black">
            <div className="relative min-w-0 flex-1">
              <PriceChart />
              <Legend />
            </div>
            <div className="relative flex w-[29px] shrink-0 flex-col border-l border-white/10 text-[7px] text-[#c3c5cb]">
              <button className="mt-[2px] ml-[2px] flex h-[14px] w-6 items-center justify-between rounded-xs bg-[#131520] px-[2px] text-[#d1d4dc]">
                USD
                <ChevronDown className="size-[6px]" />
              </button>
              <ul className="flex flex-1 flex-col justify-between pt-[18px] pl-1">
                {prices.map((price) => (
                  <li key={price} className="h-[10px] leading-[10px]">
                    {price}
                  </li>
                ))}
              </ul>
              <span className="absolute top-[109px] left-0 h-[10px] w-[25px] bg-[#dfe0e3] pl-1 leading-[10px] font-medium text-[#1a1b22]">
                42219
              </span>
            </div>
          </section>

          <section className="flex bg-linear-to-b/srgb from-[#444650] to-black">
            <div className="relative min-w-0 flex-1">
              <RsiChart />
              <Watermark />
            </div>
            <ul className="flex w-[29px] shrink-0 flex-col justify-between border-l border-white/10 pt-[9px] pb-2 pl-1 text-[7px] text-[#c3c5cb]">
              {rsiLevels.map((level) => (
                <li key={level} className="h-[10px] leading-[10px]">
                  {level}
                </li>
              ))}
            </ul>
          </section>

          <div className="flex h-4 items-center border-t border-[#26272d] text-[7px] text-[#c3c5cb]">
            <ul className="flex flex-1 pl-[33px]">
              {dates.map((date, index) => (
                <li key={index} className="min-w-0 basis-0" style={{ flexGrow: date.span }}>
                  <span
                    className={clsx(
                      "flex w-0 justify-center whitespace-nowrap",
                      date.bold && "font-semibold text-[#e0e1e5]",
                    )}
                  >
                    {date.label}
                  </span>
                </li>
              ))}
            </ul>
            <button
              aria-label="Настройки шкалы"
              className="flex h-full w-[29px] shrink-0 items-center justify-center border-l border-white/10"
            >
              <Icon>
                <path d="M5.500 4h5L13 8l-2.500 4h-5L3 8z" />
                <circle cx="8" cy="8" r="1.600" />
              </Icon>
            </button>
          </div>

          <BottomPanel />
        </main>

        <aside className="flex w-[26px] shrink-0 flex-col bg-[#131520] text-[#a3a6b0]">
          {widgets.map((group, index) => (
            <div key={index} className="flex flex-col">
              {index > 0 && <span className="mx-[3px] my-[2px] h-px bg-[#2f323e]" />}
              {group.map((widget) => (
                <button
                  key={widget.label}
                  aria-label={widget.label}
                  className="relative flex h-[26px] items-center justify-center"
                >
                  <Icon>{widget.icon}</Icon>
                  {widget.badge && (
                    <span className="absolute top-[3px] right-[2px] flex size-[9px] items-center justify-center rounded-full bg-[#e0284f] text-[6px] font-bold text-white">
                      {widget.badge}
                    </span>
                  )}
                </button>
              ))}
            </div>
          ))}
        </aside>
      </div>
    </div>
  );
};

export default App;
